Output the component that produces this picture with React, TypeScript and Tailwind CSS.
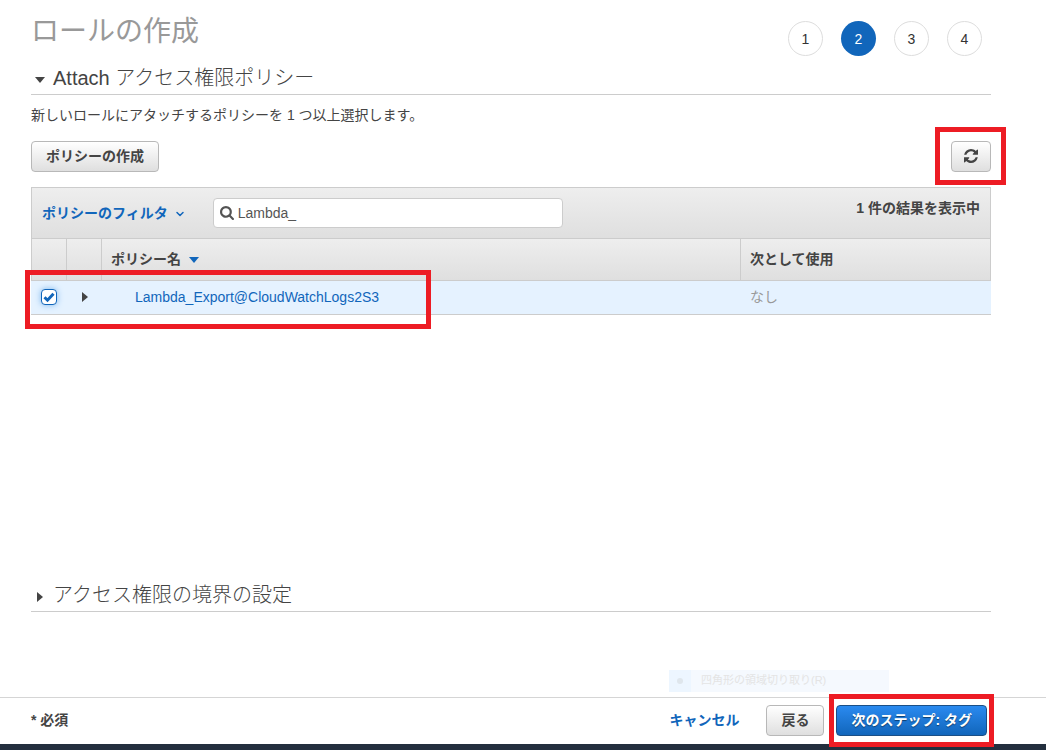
import { ReactNode, useState } from 'react';
import { ChevronDown } from 'lucide-react';

interface Policy {
  name: string;
  usedAs: string;
}

const policies: Policy[] = [{ name: 'Lambda_Export@CloudWatchLogs2S3', usedAs: 'なし' }];

const steps = [1, 2, 3, 4];
const currentStep = 2;

function RefreshIcon() {
  return (
    <svg viewBox="0 0 1536 1536" className="w-3.5 h-3.5 fill-current" aria-hidden="true">
      <path d="M1511 928q0 5-1 7-64 268-268 434.5t-478 166.5q-146 0-282.5-55t-243.5-157l-129 129q-19 19-45 19t-45-19-19-45v-448q0-26 19-45t45-19h448q26 0 45 19t19 45-19 45l-137 137q71 66 161 102t187 36q134 0 250-65t186-179q11-17 53-117 8-23 30-23h192q13 0 22.5 9.5t9.5 22.5zm25-800v448q0 26-19 45t-45 19h-448q-26 0-45-19t-19-45 19-45l138-138q-148-137-349-137-134 0-250 65t-186 179q-11 17-53 117-8 23-30 23h-199q-13 0-22.5-9.5t-9.5-22.5v-7q65-268 270-434.5t480-166.5q146 0 284 55.5t245 156.5l130-129q19-19 45-19t45 19 19 45z" />
    </svg>
  );
}

function SearchIcon() {
  return (
    <svg viewBox="0 0 1664 1664" className="w-3.5 h-3.5 shrink-0 fill-[#545454]" aria-hidden="true">
      <path d="M1152 704q0-185-131.5-316.5t-316.5-131.5-316.5 131.5-131.5 316.5 131.5 316.5 316.5 131.5 316.5-131.5 131.5-316.5zm512 832q0 52-38 90t-90 38q-54 0-90-38l-343-342q-179 124-399 124-143 0-273.5-55.5t-225-150-150-225-55.5-273.5 55.5-273.5 150-225 225-150 273.5-55.5 273.5 55.5 225 150 150 225 55.5 273.5q0 220-124 399l343 343q37 37 37 90z" />
    </svg>
  );
}

function CaretDown() {
  return (
    <svg viewBox="0 0 10 6" className="w-2.5 h-1.5 fill-current" aria-hidden="true">
      <path d="M0 0h10L5 6z" />
    </svg>
  );
}

function CaretRight() {
  return (
    <svg viewBox="0 0 6 10" className="w-1.5 h-2.5 fill-current" aria-hidden="true">
      <path d="M0 0v10l6-5z" />
    </svg>
  );
}

function SectionHeading({ open, children }: { open?: boolean; children: ReactNode }) {
  return (
    <h2 className="border-b border-[#ccc] pt-0.5 pb-0.5 text-xl leading-7 font-light">
      <button type="button" aria-expanded={!!open} className="flex items-center">
        <span className="flex w-[22px] pt-1">
          <span className="flex w-[18px] justify-center">{open ? <CaretDown /> : <CaretRight />}</span>
        </span>
        {children}
      </button>
    </h2>
  );
}

export default function App() {
  const [query, setQuery] = useState('Lambda_');
  const [selected, setSelected] = useState(true);

  const grayButton =
    'h-[31px] rounded border border-[#b8b8b8] bg-linear-to-b from-white to-[#dfdfdf] pb-0.5 text-sm font-bold text-[#444]';
  const headCell =
    'h-[43px] border-y border-r border-[#ccc] bg-linear-to-b from-[#eee] to-[#dfdfdf] pb-0.5 text-left font-bold';
  const bodyCell = 'border-b border-[#ccc] pb-0.5';

  return (
    <div className="flex min-h-screen flex-col overflow-x-hidden bg-white font-['Liberation_Sans','Noto_Sans_CJK_JP',sans-serif] text-sm text-[#444]">
      <main className="flex-1 pl-[31px] pr-[55px]">
        <header className="flex items-start justify-between pr-[9px]">
          <h1 className="pt-3.5 text-[28px] leading-9 font-normal text-[#999]">ロールの作成</h1>
          <ol className="flex gap-[18px] pt-[21px]">
            {steps.map((step) => (
              <li
                key={step}
                className={
                  step === currentStep
                    ? 'flex h-[35px] w-[35px] items-center justify-center rounded-full bg-[#1166bb] text-white'
                    : 'flex h-[35px] w-[35px] items-center justify-center rounded-full border border-[#ddd] text-[#333]'
                }
              >
                {step}
              </li>
            ))}
          </ol>
        </header>

        <section className="mt-1.5">
          <SectionHeading open>Attach アクセス権限ポリシー</SectionHeading>
          <p className="mt-2.5 leading-5">新しいロールにアタッチするポリシーを 1 つ以上選択します。</p>

          <div className="mt-4 flex justify-between">
            <button type="button" className={`${grayButton} px-3.5`}>
              ポリシーの作成
            </button>
            <div className="relative">
              <button
                type="button"
                aria-label="更新"
                className={`${grayButton} flex w-10 items-center justify-center`}
              >
                <RefreshIcon />
              </button>
              <div className="pointer-events-none absolute -top-3.5 -right-[15px] -bottom-[13px] -left-4 z-10 border-[5px] border-[#ed1c24]" />
            </div>
          </div>

          <div className="mt-[15px] min-h-[392px]">
            <div className="relative">
              <div className="flex h-[51px] items-start border border-b-0 border-[#ccc] bg-linear-to-b from-[#eee] to-[#dfdfdf] px-2.5">
                <button
                  type="button"
                  className="mt-[15px] flex items-center gap-1.5 leading-5 font-bold text-[#1166bb]"
                >
                  ポリシーのフィルタ
                  <ChevronDown className="mt-0.5 w-3 h-3" strokeWidth={3} />
                </button>
                <label className="mt-2.5 ml-[27px] flex h-[30px] w-[350px] items-center gap-1 rounded border border-[#ccc] bg-white px-1.5">
                  <SearchIcon />
                  <input
                    type="text"
                    aria-label="検索"
                    value={query}
                    onChange={(e) => setQuery(e.target.value)}
                    className="min-w-0 flex-1 text-[#555] outline-none"
                  />
                </label>
                <span className="mt-2.5 ml-auto leading-5 font-bold">1 件の結果を表示中</span>
              </div>

              <table className="w-full table-fixed border-separate border-spacing-0">
                <colgroup>
                  <col className="w-9" />
                  <col className="w-[35px]" />
                  <col />
                  <col className="w-[250px]" />
                </colgroup>
                <thead>
                  <tr>
                    <th className={`${headCell} border-l`} />
                    <th className={headCell} />
                    <th className={`${headCell} px-[9px]`}>
                      <button type="button" className="flex items-center gap-2">
                        ポリシー名
                        <span className="pt-0.5 text-[#1166bb]">
                          <CaretDown />
                        </span>
                      </button>
                    </th>
                    <th className={`${headCell} px-[9px]`}>次として使用</th>
                  </tr>
                </thead>
                <tbody>
                  {policies.map((policy) => (
                    <tr key={policy.name} className="bg-[#e5f2ff]">
                      <td className={`${bodyCell} h-[34px] pl-2.5`}>
                        <span className="relative block h-4 w-4">
                          <input
                            type="checkbox"
                            aria-label={policy.name}
                            checked={selected}
                            onChange={(e) => setSelected(e.target.checked)}
                            className="block h-4 w-4 appearance-none rounded-sm border border-[#1166bb] bg-white shadow-[0_0_6px_#7db8ee]"
                          />
                          {selected && (
                            <svg
                              viewBox="0 0 16 16"
                              className="pointer-events-none absolute inset-0 fill-none stroke-[#1166bb] stroke-3"
                              aria-hidden="true"
                            >
                              <path d="M3.5 8.2l3 3 6-6.4" />
                            </svg>
                          )}
                        </span>
                      </td>
                      <td className={`${bodyCell} pl-[15px]`}>
                        <button type="button" aria-label="展開" className="flex">
                          <CaretRight />
                        </button>
                      </td>
                      <td className={`${bodyCell} pl-[33px]`}>
                        <a href="#policy" className="text-[#1166bb]">
                          {policy.name}
                        </a>
                      </td>
                      <td className={`${bodyCell} pl-[9px] text-[#999]`}>{policy.usedAs}</td>
                    </tr>
                  ))}
                </tbody>
              </table>
              <div className="pointer-events-none absolute -bottom-3.5 -left-1.5 h-[59px] w-[406px] border-[5px] border-[#ed1c24]" />
            </div>
          </div>
        </section>

        <section>
          <SectionHeading>アクセス権限の境界の設定</SectionHeading>
        </section>
      </main>

      <footer className="relative">
        <div className="absolute -top-[27px] right-[157px] flex h-[22px] w-[220px] items-center bg-[#f5f9fe] text-[11px] text-[#e4e4e4]">
          <span className="flex h-full w-[22px] items-center justify-center bg-[#edf6ff]">
            <span className="h-1.5 w-1.5 rounded-full bg-[#dfe6ec]" />
          </span>
          <span className="pl-2.5">四角形の領域切り取り(R)</span>
        </div>
        <div className="flex items-center justify-between border-t border-[#d5d5d5] pt-[7px] pr-[59px] pb-2 pl-[31px]">
          <span className="pb-0.5 font-bold">* 必須</span>
          <div className="flex items-center">
            <a href="#cancel" className="mr-[27px] pb-0.5 font-bold text-[#1166bb]">
              キャンセル
            </a>
            <button type="button" className={`${grayButton} mr-3 px-3.5`}>
              戻る
            </button>
            <div className="relative">
              <button
                type="button"
                className="h-[31px] rounded-sm border border-[#1b4f86] bg-linear-to-b from-[#2a8af0] to-[#1166bb] px-3.5 pb-0.5 text-sm font-bold text-white text-shadow-[0_1px_1px_#0a3d70]"
              >
                次のステップ: タグ
              </button>
              <div className="pointer-events-none absolute -top-[11px] -right-[7px] -bottom-[11px] -left-[7px] z-10 border-[5px] border-[#ed1c24]" />
            </div>
          </div>
        </div>
        <div className="h-1.5 bg-[#232f3e]" />
      </footer>
    </div>
  );
}
